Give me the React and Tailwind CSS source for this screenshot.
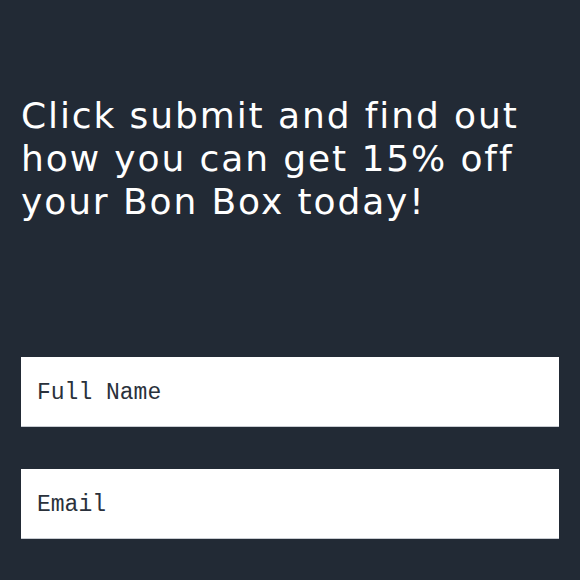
export default function App() {
  return (
    <div className="w-[580px] h-[580px] bg-[#222a35] overflow-hidden">
      <div className="px-[21px] pt-[94px]">
        <h1 className="text-white text-[36px] leading-[43px] font-normal tracking-[1.9px] font-['DejaVu_Sans',sans-serif]">
          Click submit and find out
          <br />
          how you can get 15% off
          <br />
          your Bon Box today!
        </h1>
      </div>
      <form className="px-[21px] pt-[134px] flex flex-col gap-[42px]">
        <input
          type="text"
          placeholder="Full Name"
          className="w-[538px] h-[70px] bg-white border-b border-[#c8ccd2] px-[16px] pt-[2px] text-[23px] font-['Liberation_Mono',monospace] text-[#2a313b] placeholder:text-[#2a313b] outline-none"
        />
        <input
          type="email"
          placeholder="Email"
          className="w-[538px] h-[70px] bg-white border-b border-[#c8ccd2] px-[16px] pt-[2px] text-[23px] font-['Liberation_Mono',monospace] text-[#2a313b] placeholder:text-[#2a313b] outline-none"
        />
      </form>
    </div>
  );
}
